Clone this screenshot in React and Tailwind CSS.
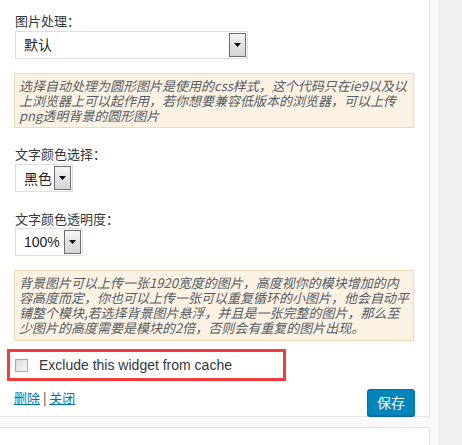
import React from "react";

const cjk = { fontFamily: '"Noto Sans CJK SC", "Liberation Sans", sans-serif' };
const latin = { fontFamily: '"Liberation Sans", "Noto Sans CJK SC", sans-serif' };

function Select({ width, children }) {
  return (
    <div
      className={`flex h-[28px] items-stretch border border-[#dddddd] bg-white p-[1px] ${width}`}
    >
      <div
        className="flex flex-1 items-center pl-[7px] text-[14px] text-[#222]"
        style={{ fontFamily: '"Liberation Sans", "Noto Sans CJK SC", sans-serif' }}
      >
        {children}
      </div>
      <div className="flex w-[17px] items-center justify-center border border-[#6e6e6e] bg-gradient-to-b from-[#f4f4f4] to-[#d4d4d4]">
        <svg width="7" height="4" viewBox="0 0 7 4">
          <path d="M0 0 H7 L3.5 4 Z" fill="#000" />
        </svg>
      </div>
    </div>
  );
}

function Label({ children, className = "" }) {
  return (
    <div className={`text-[13px] leading-[18px] text-[#32373c] ${className}`} style={cjk}>
      {children}
    </div>
  );
}

function Note({ lines, className = "" }) {
  return (
    <div
      className={`w-[400px] border border-[#f1d9b8] bg-[#fcf2e4] px-[4px] pt-[4px] pb-[4px] text-[13px] italic leading-[15px] text-[#555d66] whitespace-nowrap ${className}`}
      style={cjk}
    >
      {lines.map((l, i) => (
        <div key={i}>{l}</div>
      ))}
    </div>
  );
}

export default function App() {
  return (
    <div className="flex h-[445px] w-[462px] overflow-hidden bg-[#f1f1f1]">
      <div className="flex w-[438px] flex-col bg-[#f9f9f9]">
        <div className="flex h-[433px] w-[430px] flex-col border-r border-b border-[#e2e2e2] bg-white pl-[15px] pr-[15px] pt-[12px]">
          <Label>图片处理：</Label>
          <div className="mt-[1px]">
            <Select width="w-[233px]">默认</Select>
          </div>
          <Note
            className="-ml-[1px] mt-[14px]"
            lines={[
              "选择自动处理为圆形图片是使用的css样式，这个代码只在ie9以及以",
              "上浏览器上可以起作用，若你想要兼容低版本的浏览器，可以上传",
              "png透明背景的圆形图片",
            ]}
          />
          <Label className="mt-[17px]">文字颜色选择：</Label>
          <div className="mt-[1px]">
            <Select width="w-[58px]">
              <span style={cjk}>黑色</span>
            </Select>
          </div>
          <Label className="mt-[18px]">文字颜色透明度：</Label>
          <div>
            <Select width="w-[68px]">100%</Select>
          </div>
          <Note
            className="-ml-[1px] mt-[14px] pb-[5px]"
            lines={[
              "背景图片可以上传一张1920宽度的图片，高度视你的模块增加的内",
              "容高度而定，你也可以上传一张可以重复循环的小图片，他会自动平",
              "铺整个模块,若选择背景图片悬浮，并且是一张完整的图片，那么至",
              "少图片的高度需要是模块的2倍，否则会有重复的图片出现。",
            ]}
          />
          <div className="-ml-[8px] mt-[8px] flex h-[32px] w-[279px] items-center border-[3px] border-[#f53b3b] pl-[5px]">
            <span className="h-[13px] w-[13px] border border-[#a9a9a9] bg-gradient-to-br from-[#d8d8d8] to-[#fafafa]" />
            <span className="ml-[11px] text-[14px] text-[#32373c]" style={latin}>
              Exclude this widget from cache
            </span>
          </div>
          <div className="mt-[8px] flex items-start justify-between">
            <div className="-ml-[1px] text-[13px] leading-[18px] text-[#32373c]" style={cjk}>
              <a className="text-[#0073aa] underline">删除</a>
              <span> | </span>
              <a className="text-[#0073aa] underline">关闭</a>
            </div>
            <button
              className="-mr-[1px] flex h-[27px] w-[48px] items-center justify-center rounded-[3px] border border-[#0073aa] bg-[#0085ba] text-[14px] text-white shadow-[0_1px_0_#006799]"
              style={cjk}
            >
              保存
            </button>
          </div>
        </div>
        <div className="mt-[10px] h-[20px] w-[430px] border-t border-r border-[#e2e2e2] bg-white" />
      </div>
    </div>
  );
}
